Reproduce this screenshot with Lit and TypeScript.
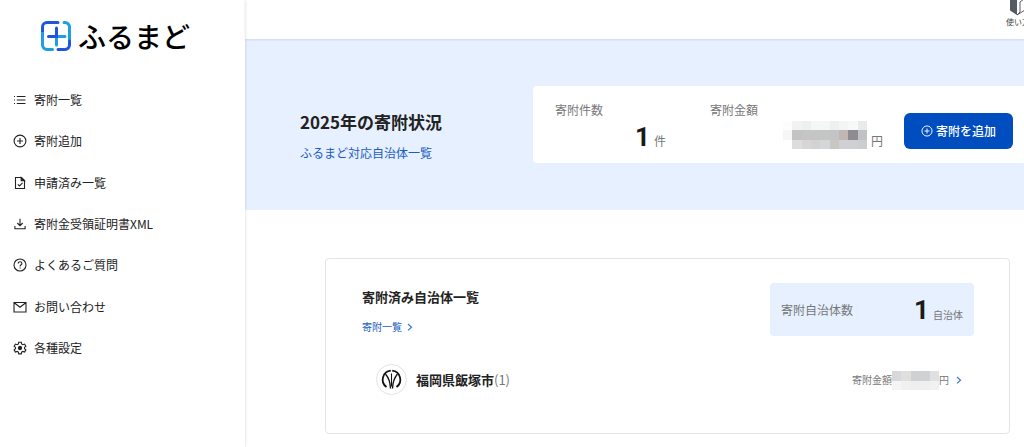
import { LitElement, html, css, svg } from "lit";
import { customElement } from "lit/decorators.js";

const stroke = (body: unknown) => html`<svg class="icon" viewBox="0 0 14 14" fill="none" stroke="currentColor" stroke-width="1.1" aria-hidden="true">${body}</svg>`;

const icons = {
  list: stroke(svg`<path d="M3.800 3.500h8.700M3.800 7h8.700M3.800 10.500h8.700M1 3.500h1M1 7h1M1 10.500h1"/>`),
  plus: stroke(svg`<circle cx="7" cy="7" r="5.900"/><path d="M7 4v6M4 7h6"/>`),
  doc: stroke(svg`<path d="M2.500 1.500h6L11.500 4.500v8h-9z"/><path d="M8.200 1.500v3.300h3.300z" fill="currentColor"/><path d="M4.800 8.300l1.700 1.700 3-3.200"/>`),
  download: stroke(svg`<path d="M7 1.800v6.700M4.300 6L7 8.700 9.700 6M1.900 9v2.800h10.200V9"/>`),
  help: stroke(svg`<circle cx="7" cy="7" r="6"/><path d="M5.200 5.500c0-2.400 3.700-2.300 3.700-.1C8.900 6.800 7.100 6.800 7.100 8.400M7.100 9.500v1.100"/>`),
  mail: stroke(svg`<path d="M1 2.500h12v9.500H1zM1.200 2.700L7 7.300l5.800-4.600"/>`),
  gear: stroke(svg`<path d="M5.700 1.200h2.600l.3 1.700 1.300.8 1.700-.6 1.300 2.200-1.400 1.100v1.300l1.400 1.100-1.300 2.200-1.700-.6-1.300.8-.3 1.700H5.700l-.3-1.700-1.300-.8-1.700.6-1.300-2.200 1.400-1.100V6.400L1.100 5.300l1.300-2.200 1.700.6 1.300-.8z"/><circle cx="7" cy="7" r="1.600" fill="currentColor"/>`),
};

const menu = [
  { icon: icons.list, label: "寄附一覧" },
  { icon: icons.plus, label: "寄附追加" },
  { icon: icons.doc, label: "申請済み一覧" },
  { icon: icons.download, label: "寄附金受領証明書XML" },
  { icon: icons.help, label: "よくあるご質問" },
  { icon: icons.mail, label: "お問い合わせ" },
  { icon: icons.gear, label: "各種設定" },
];

const mosaic = (rows: string[][], width: number, height: number) => html`<svg class="mosaic" width=${width} height=${height} viewBox="0 0 ${rows[0].length} ${rows.length}" preserveAspectRatio="none" shape-rendering="crispEdges" role="img" aria-label="非表示の金額">
  ${rows.map((row, y) => row.map((c, x) => svg`<rect x=${x} y=${y} width="1" height="1" fill=${c}></rect>`))}
</svg>`;

const totalMosaic = [
  ["#fdfdfd", "#f2f2f2", "#eeefef", "#f5f6f6", "#f5f6f6", "#edeff0", "#f3f4f4", "#f7f8f8", "#e9ebeb"],
  ["#f6f6f6", "#c3c2c4", "#c6c5c6", "#c6c5c6", "#c5c5c5", "#c3c4c5", "#c0b7b4", "#8e8c90", "#c0c2c4"],
  ["#ffffff", "#dfdcde", "#d8d6d5", "#d3d2d3", "#d4d7da", "#cac6c4", "#d0d0d2", "#cfd0d1", "#cccdce"],
];
const rowMosaic = [
  ["#d8d8da", "#e0dfde", "#cfd0d2", "#d0d1d3", "#dfe1e1"],
  ["#f5f5f5", "#f0f0f0", "#eeeeee", "#efefef", "#f0f1f1"],
];

const chevron = html`<svg class="chevron" viewBox="0 0 8 10" fill="none" stroke="currentColor" stroke-width="1.2" aria-hidden="true"><path d="M2 2L5.500 5.200 2 8.400"/></svg>`;

@customElement("app-root")
export class AppRoot extends LitElement {
  static styles = css`
    :host {
      display: flex;
      min-height: 100vh;
      overflow: hidden;
      font-family: "Noto Sans CJK JP", sans-serif;
      font-size: 12px;
      line-height: 18px;
      color: #222;
      background: #fff;
    }
    * { box-sizing: border-box; }
    a { color: inherit; text-decoration: none; }
    h1, h2, ul, dl, dd { margin: 0; padding: 0; }
    .side {
      flex: 0 0 245px;
      box-shadow: 0 0 3px rgba(0, 0, 0, 0.16);
      z-index: 1;
    }
    .brand {
      display: flex;
      align-items: center;
      gap: 6px;
      padding: 16px 0 0 40px;
      font-size: 28px;
      line-height: 40px;
      font-weight: 500;
      color: #000;
    }
    .logo { width: 32px; height: 32px; }
    .menu {
      display: grid;
      height: 313px;
      list-style: none;
      padding: 23px 0 0 13px;
    }
    .menu a {
      display: flex;
      align-items: center;
      gap: 7px;
      height: 100%;
    }
    .icon { width: 14px; height: 14px; flex: none; }
    .main { flex: 1; min-width: 0; }
    .top {
      position: relative;
      display: flex;
      justify-content: flex-end;
      height: 39px;
      overflow: hidden;
      box-shadow: 0 1px 2px rgba(0, 0, 0, 0.1);
    }
    .guide {
      flex: none;
      width: 36px;
      margin-right: -18px;
      font-size: 8px;
      line-height: 12px;
      white-space: nowrap;
      color: #444;
    }
    .guide svg { display: block; width: 20px; height: 16px; margin-left: 3px; }
    .hero {
      display: flex;
      align-items: center;
      justify-content: space-between;
      gap: 24px;
      padding: 47px 0 47px 55px;
      background: #e6f0ff;
    }
    .link { color: #1b5cc4; }
    h1 { font-size: 17px; line-height: 28px; }
    .intro { display: grid; gap: 8px; padding-top: 20px; white-space: nowrap; }
    .summary {
      flex: 0 0 491px;
      display: flex;
      align-items: center;
      padding: 0 11px 0 22px;
      height: 77px;
      background: #fff;
      border-radius: 4px 0 0 4px;
    }
    .stat { width: 111px; padding-top: 6px; color: #777; }
    .stat.total { width: 173px; margin-left: 44px; }
    .stat dd, .count dd {
      display: flex;
      align-items: baseline;
      justify-content: flex-end;
      gap: 4px;
      line-height: 36px;
    }
    .stat dd { height: 36px; }
    .stat.total dd { line-height: 44px; }
    .num { font-size: 26px; font-weight: 700; color: #1a1a1a; font-family: Roboto, sans-serif; }
    .mosaic { display: block; flex: none; }
    .stat .mosaic { margin-top: 2px; align-self: flex-start; }
    .add {
      display: flex;
      align-items: center;
      justify-content: center;
      gap: 3px;
      width: 109px;
      height: 36px;
      margin: 12px 0 0 auto;
      padding: 0;
      border: 0;
      border-radius: 6px;
      background: #004dc0;
      color: #fff;
      font: 500 12px/18px "Noto Sans CJK JP", sans-serif;
    }
    .add .icon { width: 12px; height: 12px; }
    .panel {
      margin: 48px 14px 12px 80px;
      padding: 24px 35px 38px;
      border: 1px solid #e4e4e4;
      border-radius: 4px;
    }
    .head { display: flex; justify-content: space-between; }
    h2 { font-size: 13px; line-height: 20px; }
    .title { display: grid; gap: 11px; align-content: start; padding: 4px 0 0 1px; }
    .small { font-size: 10px; display: flex; align-items: center; gap: 4px; }
    .chevron { width: 8px; height: 10px; color: #3b76d8; }
    .count {
      display: flex;
      align-items: center;
      justify-content: space-between;
      width: 204px;
      height: 53px;
      padding: 0 11px;
      border-radius: 4px;
      background: #e6f0ff;
      color: #777;
    }
    .count dd { padding-top: 6px; font-size: 10px; }
    .town {
      display: flex;
      align-items: center;
      gap: 9px;
      padding: 28px 11px 0 15px;
      font-size: 13px;
    }
    .crest { width: 31px; height: 31px; }
    .qty { color: #777; font-weight: 400; }
    .amount {
      display: flex;
      align-items: center;
      margin-left: auto;
      font-size: 10px;
      color: #777;
    }
    .amount .mosaic { margin-top: 2px; }
    .amount .chevron { margin-left: 6px; }
  `;

  render() {
    return html`
      <aside class="side">
        <a class="brand" href="#">
          <svg class="logo" viewBox="0 0 32 32" fill="none" stroke-width="3" stroke-linecap="round" aria-hidden="true">
            <path d="M18 2.500H7a4.500 4.500 0 0 0-4.500 4.500v5" stroke="#1f57dc"/>
            <path d="M2.500 12v13A4.500 4.500 0 0 0 7 29.500h5.500" stroke="#1f9fe0" stroke-linecap="butt"/>
            <path d="M12.400 29.500h.1M24 2.500h1A4.500 4.500 0 0 1 29.500 7v14" stroke="#1f9fe0"/>
            <path d="M29.500 21v4a4.500 4.500 0 0 1-4.500 4.500h-7" stroke="#1f57dc"/>
            <path d="M16.500 17v8M16.500 16.500h8.500" stroke="#1f9fe0"/>
            <path d="M16.500 8v8.500H8.500" stroke="#1f57dc"/>
          </svg>
          <span>ふるまど</span>
        </a>
        <nav><ul class="menu">
          ${menu.map((m) => html`<li><a href="#">${m.icon}<span>${m.label}</span></a></li>`)}
        </ul></nav>
      </aside>
      <main class="main">
        <header class="top">
          <a class="guide" href="#">
            <svg viewBox="0 0 20 16" aria-hidden="true">
              <path d="M1 0h7v15L1 10.500z" fill="#555b62"/>
              <path d="M8 15l8-5V0M8 15l3-3V2l4-3" fill="none" stroke="#555b62" stroke-width="1"/>
            </svg>
            使い方
          </a>
        </header>
        <section class="hero">
          <div class="intro">
            <h1>2025年の寄附状況</h1>
            <a class="link" href="#">ふるまど対応自治体一覧</a>
          </div>
          <div class="summary">
            <dl class="stat"><dt>寄附件数</dt><dd><span class="num">1</span>件</dd></dl>
            <dl class="stat total"><dt>寄附金額</dt><dd>${mosaic(totalMosaic, 84, 28)}円</dd></dl>
            <button class="add" type="button">${icons.plus}寄附を追加</button>
          </div>
        </section>
        <section class="panel">
          <div class="head">
            <div class="title">
              <h2>寄附済み自治体一覧</h2>
              <a class="link small" href="#">寄附一覧${chevron}</a>
            </div>
            <dl class="count"><dt>寄附自治体数</dt><dd><span class="num">1</span>自治体</dd></dl>
          </div>
          <a class="town" href="#">
            <svg class="crest" viewBox="0 0 31 31" aria-hidden="true">
              <circle cx="15.500" cy="15.500" r="15" fill="#fff" stroke="#e2e2e2"/>
              <path d="M10.500 23A9 9 0 0 1 14.800 6.700M16.200 6.700A9 9 0 0 1 20.500 23" fill="none" stroke="#111" stroke-width="1.800"/>
              <path d="M14.500 24.500C14.300 18.500 12.500 13.500 9.500 10M16.500 24.500C16.700 18.500 18.500 13.500 21.500 10" fill="none" stroke="#111" stroke-width="1.300"/>
              <path d="M15.500 9.500v13" stroke="#111" stroke-width="1.100"/>
            </svg>
            <strong>福岡県飯塚市<span class="qty">(1)</span></strong>
            <span class="amount">寄附金額${mosaic(rowMosaic, 47, 19)}円${chevron}</span>
          </a>
        </section>
      </main>
    `;
  }
}
